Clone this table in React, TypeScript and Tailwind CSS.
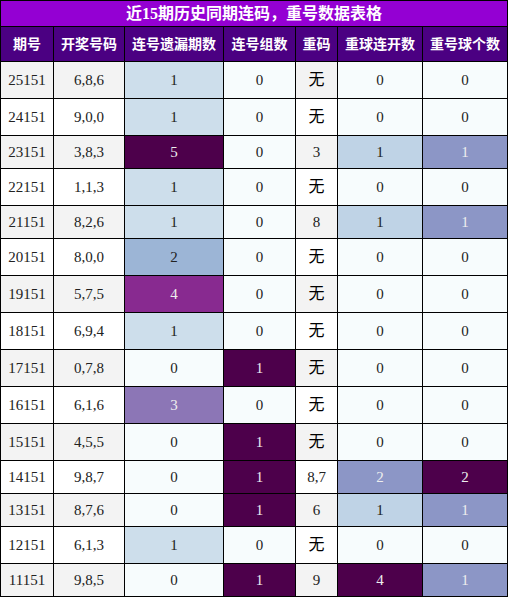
const rows: [string, string, number, number, string, number, number][] = [
  ['25151', '6,8,6', 1, 0, '无', 0, 0],
  ['24151', '9,0,0', 1, 0, '无', 0, 0],
  ['23151', '3,8,3', 5, 0, '3', 1, 1],
  ['22151', '1,1,3', 1, 0, '无', 0, 0],
  ['21151', '8,2,6', 1, 0, '8', 1, 1],
  ['20151', '8,0,0', 2, 0, '无', 0, 0],
  ['19151', '5,7,5', 4, 0, '无', 0, 0],
  ['18151', '6,9,4', 1, 0, '无', 0, 0],
  ['17151', '0,7,8', 0, 1, '无', 0, 0],
  ['16151', '6,1,6', 3, 0, '无', 0, 0],
  ['15151', '4,5,5', 0, 1, '无', 0, 0],
  ['14151', '9,8,7', 0, 1, '8,7', 2, 2],
  ['13151', '8,7,6', 0, 1, '6', 1, 1],
  ['12151', '6,1,3', 1, 0, '无', 0, 0],
  ['11151', '9,8,5', 0, 1, '9', 4, 1],
];

const headers = ['期号', '开奖号码', '连号遗漏期数', '连号组数', '重码', '重球连开数', '重号球个数'];

const base = 'bg-[#f7fcfd] text-[#222]';
const dark = 'bg-[#4d004b] text-[#eee]';

const lianColor: Record<number, string> = {
  0: base,
  1: 'bg-[#cddeeb] text-[#222]',
  2: 'bg-[#9cb5d6] text-[#222]',
  3: 'bg-[#8c76b6] text-[#eee]',
  4: 'bg-[#882a90] text-[#eee]',
  5: dark,
};
const zuColor: Record<number, string> = {0: base, 1: dark};
const kaiColor: Record<number, string> = {
  0: base,
  1: 'bg-[#bfd3e6] text-[#222]',
  2: 'bg-[#8c96c6] text-[#eee]',
  4: dark,
};
const geColor: Record<number, string> = {0: base, 1: 'bg-[#8c96c6] text-[#eee]', 2: dark};

const Cell = ({cls, tall, children}: {cls: string; tall: boolean; children: React.ReactNode}) => (
  <div className={`flex items-center justify-center text-[15px] ${tall ? 'h-[36px]' : 'h-[32px]'} ${cls}`}>
    {children}
  </div>
);

export default function App() {
  return (
    <div
      className="w-[508px] grid grid-cols-[52px_70px_98px_71px_41px_84px_84px] gap-px bg-black border border-black"
      style={{fontFamily: '"Liberation Serif", "Noto Sans CJK SC", serif'}}
    >
      <div className="col-span-7 h-[25px] bg-[#9400d3] text-white font-bold text-[16px] flex items-center justify-center">
        近15期历史同期连码，重号数据表格
      </div>
      {headers.map(h => (
        <div key={h} className="h-[34px] bg-[#4b0082] text-white font-bold text-[14px] flex items-center justify-center">
          {h}
        </div>
      ))}
      {rows.map((r, i) => {
        const tall = r[4] === '无';
        const alt = i % 2 === 0 ? 'bg-[#f3f3f3] text-[#222]' : 'bg-white text-[#222]';
        return [
          <Cell key={r[0] + 'a'} cls={alt} tall={tall}>{r[0]}</Cell>,
          <Cell key={r[0] + 'b'} cls={alt} tall={tall}>{r[1]}</Cell>,
          <Cell key={r[0] + 'c'} cls={lianColor[r[2]]} tall={tall}>{r[2]}</Cell>,
          <Cell key={r[0] + 'd'} cls={zuColor[r[3]]} tall={tall}>{r[3]}</Cell>,
          <Cell key={r[0] + 'e'} cls={`${alt} ${tall ? 'text-[16px] text-black' : ''}`} tall={tall}>{r[4]}</Cell>,
          <Cell key={r[0] + 'f'} cls={kaiColor[r[5]]} tall={tall}>{r[5]}</Cell>,
          <Cell key={r[0] + 'g'} cls={geColor[r[6]]} tall={tall}>{r[6]}</Cell>,
        ];
      })}
    </div>
  );
}
